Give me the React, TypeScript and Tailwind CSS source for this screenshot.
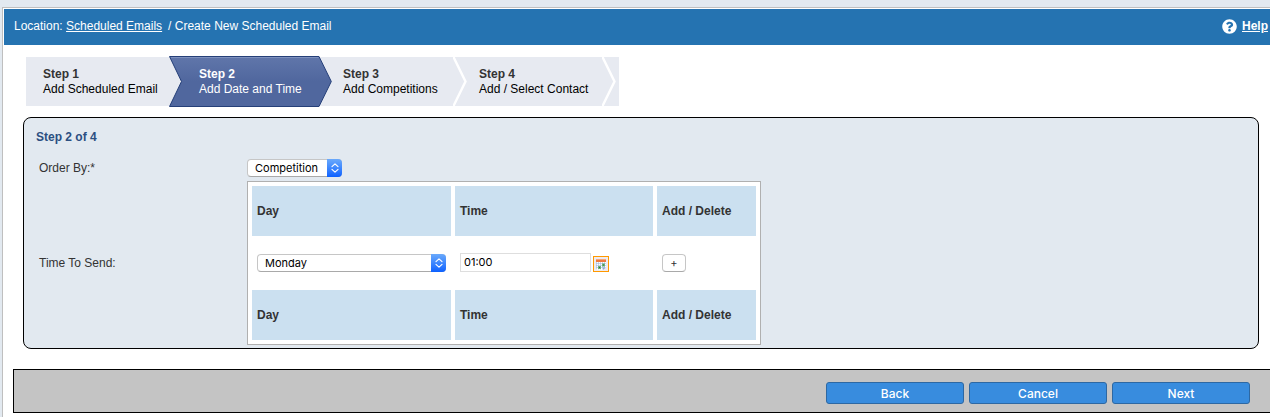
import { useState } from "react"
import type { SelectHTMLAttributes } from "react"
import { FaQuestionCircle } from "react-icons/fa"

const days = ["Monday", "Tuesday", "Wednesday", "Thursday", "Friday", "Saturday", "Sunday"]

function Select({ options, className, ...props }: SelectHTMLAttributes<HTMLSelectElement> & { options: string[]; className: string }) {
  return (
    <span className={`relative block h-[18px] ${className}`}>
      <select
        className="block h-full w-full appearance-none rounded border border-[#c6c6c6] border-b-[#a9a9a9] bg-white pl-[7px] pr-4 font-['Inter',sans-serif] text-[11px] leading-4 text-black"
        {...props}
      >
        {options.map((option) => (
          <option key={option}>{option}</option>
        ))}
      </select>
      <span className="pointer-events-none absolute inset-y-0 right-0 flex w-[15px] items-center justify-center rounded-r bg-linear-to-b from-[#6aa9fb] to-[#0a60ff]">
        <svg width="8" height="10" viewBox="0 0 8 10" fill="none" stroke="#fff" strokeWidth="1.2" strokeLinecap="round" strokeLinejoin="round">
          <path d="M1 3.6 4 .9 7 3.6M1 6.4 4 9.1 7 6.4" />
        </svg>
      </span>
    </span>
  )
}

function Chevron() {
  return (
    <svg className="absolute left-0 top-0" width="15" height="49" viewBox="0 0 15 49" fill="none" stroke="#fff" strokeWidth="2.4">
      <path d="M0 -1 12.5 24.5 0 50" />
    </svg>
  )
}

function CalendarIcon() {
  return (
    <svg width="14" height="14" viewBox="0 0 14 14">
      <rect width="14" height="14" fill="#eeebf0" />
      <path d="M2 4h10v6l-3 3H2z" fill="#fff" />
      <path d="M2 6.5h10M2 8.5h10M2 10.5h9M2.5 5v7.5M4.5 5v7.5M6.5 5v7.5M8.5 5v7.5M10.5 5v6" stroke="#9dbbe0" strokeWidth=".6" />
      <path d="M9 13V10.4h3z" fill="#8fa9d0" />
      <path d="M2 2h10v3H2z" fill="#ee7a42" />
      <path d="M2 2h10v1H2z" fill="#f7a679" />
      <path d="M4 9h3v3H4zM8 6.5h3v3H8z" fill="#6fb07a" />
      <path d="M5 10h1v1H5zM9 7.5h1v1H9z" fill="#2c7a35" />
    </svg>
  )
}

function HeadingRow() {
  return (
    <tr className="h-[50px] bg-[#cbe0f0] text-left">
      <th className="w-[199px] px-[5px]">Day</th>
      <th className="w-[198px] px-[5px]">Time</th>
      <th className="w-[99px] px-[5px]">Add / Delete</th>
    </tr>
  )
}

export default function App() {
  const [orderBy, setOrderBy] = useState("Competition")
  const [day, setDay] = useState("Monday")
  const [time, setTime] = useState("01:00")

  return (
    <div className="min-h-screen bg-[#e2e9f0] pl-0.5 pt-[7px] font-['Liberation_Sans',Arial,sans-serif] text-xs leading-[15px] text-[#333]">
      <div className="min-h-[calc(100vh-7px)] border-l border-t border-[#bfbfbf] bg-white">
        <header className="ml-px mt-px flex h-9 items-center justify-between bg-[#2573b1] pb-0.5 pl-2.5 pr-0.5 text-white">
          <nav>
            Location: <a href="#" className="mr-1.5 underline">Scheduled Emails</a>/ Create New Scheduled Email
          </nav>
          <a href="#" className="flex items-center gap-[5px] font-bold">
            <FaQuestionCircle className="size-[15px]" />
            <span className="underline">Help</span>
          </a>
        </header>

        {/* Wizard steps */}
        <ol className="ml-[23px] mt-3 flex h-[49px] w-fit bg-[#e7eaf1] text-black">
          <li className="w-[143px] pl-[17px] pt-2.5">
            <strong className="block text-[#333]">Step 1</strong>
            Add Scheduled Email
          </li>
          <li className="relative z-10 w-[150px] pl-[30px] pt-2.5 text-white">
            <svg className="absolute -top-px left-0 -z-10" width="163" height="51" viewBox="0 0 163 51">
              <defs>
                <linearGradient id="active" x1="0" y1="0" x2="0" y2="1">
                  <stop offset="0" stopColor="#6076aa" />
                  <stop offset="0.5" stopColor="#50679e" />
                  <stop offset="1" stopColor="#50679e" />
                </linearGradient>
              </defs>
              <path d="M.5.5H150L162.3 25.5 150 50.5H.5L12.5 25.5z" fill="url(#active)" stroke="#253f78" />
              <path d="M2 1.5H149.5" stroke="#7d90bd" />
            </svg>
            <strong className="block">Step 2</strong>
            Add Date and Time
          </li>
          <li className="w-[134px] pl-6 pt-2.5">
            <strong className="block text-[#333]">Step 3</strong>
            Add Competitions
          </li>
          <li className="relative w-[149px] pl-[26px] pt-2.5">
            <Chevron />
            <strong className="block text-[#333]">Step 4</strong>
            Add / Select Contact
          </li>
          <li className="relative w-[17px]" aria-hidden="true">
            <Chevron />
          </li>
        </ol>

        <main className="ml-5 mr-[11px] mt-[11px] rounded-lg border border-black bg-[#e2e9f0] px-3 pb-[3px] pt-3">
          <h1 className="font-bold text-[#2b4f81]">Step 2 of 4</h1>
          <div className="mt-3.5 grid grid-cols-[208px_1fr] items-center gap-y-1 pl-[3px]">
            <label htmlFor="order">Order By:*</label>
            <Select id="order" className="w-[95px]" options={["Competition", "Date"]} value={orderBy} onChange={(e) => setOrderBy(e.target.value)} />

            <label htmlFor="day">Time To Send:</label>
            <table className="w-fit border-separate border-spacing-1 border border-[#b0b0b0] bg-white">
              <thead>
                <HeadingRow />
              </thead>
              <tbody>
                <tr className="h-[46px]">
                  <td className="px-[5px]">
                    <Select id="day" className="w-full" options={days} value={day} onChange={(e) => setDay(e.target.value)} />
                  </td>
                  <td className="px-[5px] pb-0.5">
                    <div className="flex items-end gap-0.5">
                      <input
                        aria-label="Time"
                        className="h-[19px] w-[131px] border border-[#dedede] bg-white px-[3px] font-['Inter',sans-serif] text-[11px] text-black"
                        value={time}
                        onChange={(e) => setTime(e.target.value)}
                      />
                      <button type="button" aria-label="Pick a time" className="border border-[#f90]">
                        <CalendarIcon />
                      </button>
                    </div>
                  </td>
                  <td className="px-[5px]">
                    <button type="button" className="block h-[18px] w-6 rounded border border-[#c6c6c6] border-b-[#a9a9a9] bg-white font-['Inter',sans-serif] text-[11px] leading-4 text-[#333]">
                      +
                    </button>
                  </td>
                </tr>
              </tbody>
              <tfoot>
                <HeadingRow />
              </tfoot>
            </table>
          </div>
        </main>

        <footer className="ml-2.5 mt-5 flex h-11 items-center justify-end gap-[5px] border-y border-l border-black bg-[#c4c4c4] pr-5 pt-1 font-['Inter',sans-serif] font-medium text-white">
          <button type="button" className="h-[22px] w-[138px] rounded-[3px] border border-[#2d68a3] bg-[#388cde]">Back</button>
          <button type="button" className="h-[22px] w-[138px] rounded-[3px] border border-[#2d68a3] bg-[#388cde]">Cancel</button>
          <button type="button" className="h-[22px] w-[138px] rounded-[3px] border border-[#2d68a3] bg-[#388cde]">Next</button>
        </footer>
      </div>
    </div>
  )
}
